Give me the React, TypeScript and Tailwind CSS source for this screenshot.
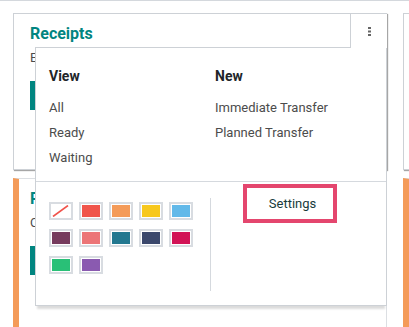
import * as React from "react";

const swatches = [
  null,
  "#f0554b",
  "#f49b59",
  "#f7c81e",
  "#62b9e9",
  "#763b5d",
  "#ec7577",
  "#237890",
  "#3b486c",
  "#d21356",
  "#29c077",
  "#8a5ab0",
];

function Swatch({ color }: { color: string | null }) {
  return (
    <div className="h-[18px] w-[24px] border-2 border-[#d8dce1] bg-white p-px">
      {color ? (
        <div className="h-full w-full" style={{ backgroundColor: color }} />
      ) : (
        <svg width="18" height="12" viewBox="0 0 18 12" className="block">
          <line x1="1" y1="11.5" x2="16" y2="0.5" stroke="#f0524a" strokeWidth="1.6" />
        </svg>
      )}
    </div>
  );
}

function KanbanCard({ title, subtitle, accent, children }: {
  title?: string;
  subtitle?: string;
  accent?: boolean;
  children?: React.ReactNode;
}) {
  return (
    <div
      className={
        accent
          ? "relative h-[160px] border border-l-[6px] border-[#dcdfe3] border-l-[#f49b59] bg-white pl-[11px] pt-[9px]"
          : "relative h-[157px] border border-[#cdd1d6] bg-white pl-[16px] pt-[9px] shadow-[1px_1px_1px_rgba(0,0,0,0.35)]"
      }
    >
      {title ? (
        <>
          <div className="text-[16px] font-bold leading-[22px] text-[#018580]">{title}</div>
          <div className="mt-[3px] text-[13px] leading-[20px] text-[#4c4c4c]">{subtitle}</div>
          <div className="mt-[13px] h-[29px] w-[110px] bg-[#018580]" />
        </>
      ) : null}
      {children}
    </div>
  );
}

function DropdownMenu() {
  return (
    <>
      <div className="absolute -right-px -top-px z-20 flex h-[35px] w-[37px] items-center justify-center border-l border-t border-[#cdd1d6] bg-white">
        <svg width="3" height="9" viewBox="0 0 3 9" className="block">
          <rect x="0" y="0" width="3" height="2" fill="#666" />
          <rect x="0" y="3.5" width="3" height="2" fill="#666" />
          <rect x="0" y="7" width="3" height="2" fill="#666" />
        </svg>
      </div>
      <div className="absolute left-[21px] top-[33px] z-10 h-[259px] w-[352px] border border-[#cdd1d6] bg-white shadow-[0_5px_2px_-2px_rgba(0,0,0,0.14)]">
        <div className="grid grid-cols-[166px_1fr] border-b border-[#d5d9de] pb-[11px] pl-[13px] pt-[18px]">
          <div>
            <div className="text-[14px] font-bold leading-[20px] text-[#212529]">View</div>
            <div className="mt-[9px] text-[13px] text-[#4c4c4c]">
              <div className="leading-[25px]">All</div>
              <div className="leading-[25px]">Ready</div>
              <div className="leading-[25px]">Waiting</div>
            </div>
          </div>
          <div>
            <div className="text-[14px] font-bold leading-[20px] text-[#212529]">New</div>
            <div className="mt-[9px] text-[13px] text-[#4c4c4c]">
              <div className="leading-[25px]">Immediate Transfer</div>
              <div className="leading-[25px]">Planned Transfer</div>
            </div>
          </div>
        </div>
        <div className="flex">
          <div className="w-[174px] pl-[13px] pt-[20px]">
            <div className="grid grid-cols-[24px_24px_24px_24px_24px] gap-x-[6px] gap-y-[9px]">
              {swatches.map((c, i) => (
                <Swatch key={i} color={c} />
              ))}
            </div>
          </div>
          <div className="mt-[16px] h-[93px] w-px bg-[#d5d9de]" />
          <div className="pl-[32px] pt-[2px]">
            <div className="flex h-[39px] w-[94px] items-center justify-center border-4 border-[#e4466e] pl-[5px] text-[13px] text-[#183b3b]">
              Settings
            </div>
          </div>
        </div>
      </div>
    </>
  );
}

export default function App() {
  return (
    <div className="h-[327px] w-[409px] overflow-hidden border-t border-[#d4d8dd] bg-white font-['Roboto',sans-serif]">
      <div className="grid grid-cols-[374px_374px] gap-x-4 gap-y-2 pl-[13px] pt-[12px]">
        <KanbanCard title="Receipts" subtitle="East Warehouse">
          <DropdownMenu />
        </KanbanCard>
        <KanbanCard />
        <KanbanCard title="Returns" subtitle="Chicago Warehouse" accent />
        <KanbanCard accent />
      </div>
    </div>
  );
}
